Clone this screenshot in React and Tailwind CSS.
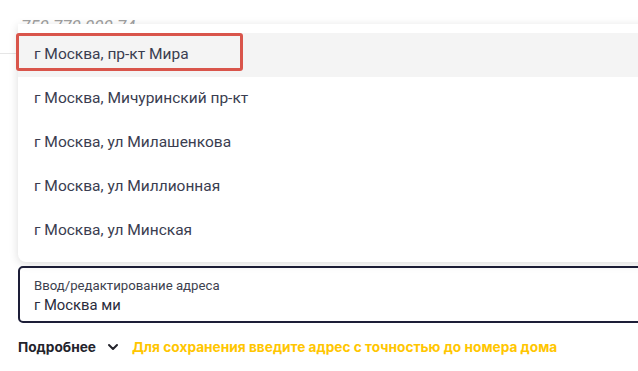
import React from "react";

const items = [
  "г Москва, пр-кт Мира",
  "г Москва, Мичуринский пр-кт",
  "г Москва, ул Милашенкова",
  "г Москва, ул Миллионная",
  "г Москва, ул Минская",
];

const App = () => {
  return (
    <div className="relative w-[638px] h-[371px] overflow-hidden bg-white font-['Roboto',sans-serif]">
      {/* phone field behind the list */}
      <div className="h-[54px] border-b border-[#e6e6e6] pl-[21px] pt-[14px]">
        <span className="text-[17px] leading-6 italic text-[#a0a0a0]">750 770 000 74</span>
      </div>

      {/* suggestions */}
      <div className="absolute top-[24px] left-[18px] right-[-12px] bg-white rounded-bl-lg shadow-[0_2px_10px_rgba(0,0,0,0.14)] py-[9px]">
        {items.map((t, i) => (
          <div
            key={t}
            className={
              i === 0
                ? "h-[44px] flex items-center pl-[16px] bg-[#f4f4f4] text-[15.5px] text-[#3a3d50]"
                : "h-[44px] flex items-center pl-[16px] text-[15.5px] text-[#3a3d50]"
            }
          >
            {t}
          </div>
        ))}
        <div className="absolute top-[9px] left-[-2px] w-[227px] h-[38px] border-[3px] border-[#d9554b] rounded-[3px]" />
      </div>

      {/* address input */}
      <div className="mt-[212px] ml-[18px] mr-[-12px] h-[57px] border-2 border-[#1d1e38] rounded-[5px] pl-[14px] pt-[9px]">
        <div className="text-[13.2px] leading-[17px] text-[#3d3f4e]">Ввод/редактирование адреса</div>
        <div className="text-[14.8px] leading-5 text-[#2a2c3c] mt-px">г Москва ми</div>
      </div>

      <div className="mt-[14px] ml-[18px] flex items-center h-5 font-['Inter',sans-serif]">
        <span className="text-[13.7px] font-bold text-[#23232b]">Подробнее</span>
        <svg className="ml-[11px]" width="12" height="12" viewBox="0 0 12 12" fill="none">
          <path d="M2 4l4 4 4-4" stroke="#23232b" strokeWidth="2" strokeLinecap="round" strokeLinejoin="round" />
        </svg>
        <span className="ml-[13px] text-[13.7px] font-bold text-[#ffc600]">
          Для сохранения введите адрес с точностью до номера дома
        </span>
      </div>
    </div>
  );
};

export default App;
